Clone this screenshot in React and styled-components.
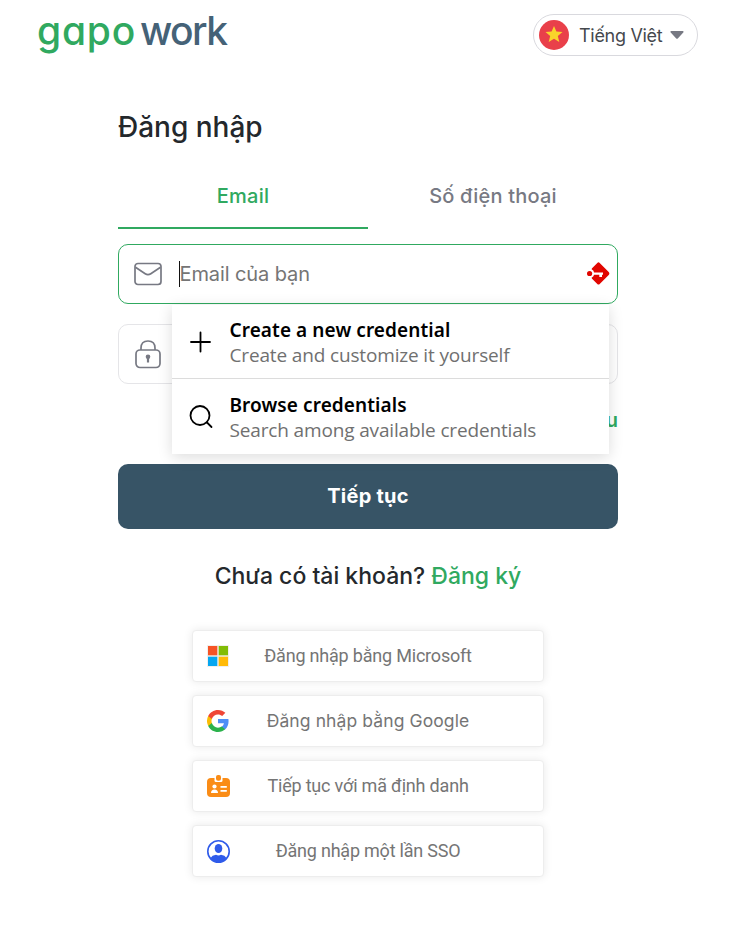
import React from "react";
import styled, { createGlobalStyle } from "styled-components";

const GlobalStyle = createGlobalStyle`
  * { box-sizing: border-box; }
  body { margin: 0; background: #fff; font-family: Inter, "Liberation Sans", sans-serif; color: #24282c; }
  button, input { font: inherit; }
`;

const Page = styled.div`
  width: 736px;
  height: 937px;
  overflow: hidden;
`;

const Header = styled.header`
  display: flex;
  justify-content: space-between;
  align-items: flex-start;
  height: 70px;
  padding: 14px 38px 0 37px;
`;

const Logo = styled.div`
  display: flex;
  gap: 5px;
  height: 42px;
  line-height: 34px;
  font-size: 39px;
  font-weight: 520;
  font-feature-settings: "cv11";
  white-space: nowrap;
`;

const LogoWord = styled.span`
  width: ${(p) => p.$width}px;
  color: ${(p) => p.$color};
  letter-spacing: ${(p) => p.$spacing}px;
`;

const Language = styled.button`
  display: flex;
  align-items: center;
  width: 165px;
  height: 42px;
  padding: 0 13px 0 5px;
  border: 1px solid #d9d9de;
  border-radius: 21px;
  background: #fff;
  color: #45484d;
  font-size: 18px;
  white-space: nowrap;
`;

const LanguageName = styled.span`
  width: 84px;
  margin: 0 7px 0 10px;
  text-align: left;
  letter-spacing: -0.3px;
`;

const Main = styled.main`
  width: 500px;
  margin: 0 auto;
`;

const Title = styled.h1`
  margin: 0;
  padding-top: 39px;
  height: 94px;
  font-size: 28px;
  line-height: 36px;
  font-weight: 500;
`;

const Tabs = styled.div`
  display: grid;
  grid-template-columns: 1fr 1fr;
  height: 65px;
`;

const Tab = styled.button`
  height: 65px;
  padding: 1px 0 0;
  border: 0;
  border-bottom: 2px solid ${(p) => (p.$active ? "#30a960" : "transparent")};
  background: none;
  color: ${(p) => (p.$active ? "#30a960" : "#777983")};
  font-size: 20px;
  font-weight: 500;
  letter-spacing: 0.2px;
`;

const Field = styled.div`
  position: relative;
  display: flex;
  align-items: center;
  height: 60px;
  margin-top: ${(p) => p.$gap}px;
  padding: 0 7px 0 15px;
  border: 1px solid ${(p) => (p.$focus ? "#30a960" : "#e5e5e8")};
  border-radius: 10px;
`;

const Placeholder = styled.div`
  flex: 1;
  height: 26px;
  margin-left: 17px;
  border-left: 1px solid #111;
  color: #757575;
  font-size: 20px;
  line-height: 27px;
  letter-spacing: -0.1px;
  text-indent: -0.5px;
`;

const Popup = styled.div`
  position: absolute;
  z-index: 2;
  top: 60px;
  left: 53px;
  width: 437px;
  height: 149px;
  background: #fff;
  box-shadow: 0 3px 14px rgba(0, 0, 0, 0.14);
  font-family: "Noto Sans", sans-serif;
`;

const PopupItem = styled.div`
  display: flex;
  align-items: center;
  gap: 16px;
  height: ${(p) => p.$height}px;
  padding: 0 0 0 15.5px;
  border-bottom: ${(p) => (p.$divided ? "1px solid #dcdcdc" : "0")};
`;

const PopupText = styled.div`
  padding-top: 2px;
`;

const PopupTitle = styled.div`
  color: #000;
  font-size: 19px;
  line-height: 25px;
  font-weight: 600;
  letter-spacing: 0.09px;
`;

const PopupNote = styled.div`
  color: #707070;
  font-size: 19px;
  line-height: 25px;
  font-family: "Open Sans", sans-serif;
  letter-spacing: -0.15px;
`;

const Forgot = styled.div`
  height: 80px;
  padding-top: 22px;
  text-align: right;
  color: #30a960;
  font-size: 20px;
  line-height: 28px;
  font-weight: 600;
`;

const Submit = styled.button`
  display: block;
  width: 500px;
  height: 65px;
  padding: 0 0 2px;
  border: 0;
  border-radius: 10px;
  background: #375466;
  color: #fff;
  font-size: 20px;
  font-weight: 700;
  letter-spacing: 0.25px;
`;

const Signup = styled.p`
  margin: 29px 0 0;
  height: 72px;
  text-align: center;
  font-size: 23px;
  line-height: 36px;
  font-weight: 450;
  white-space: nowrap;
`;

const SignupLink = styled.a`
  color: #30a960;
  font-weight: 500;
`;

const Providers = styled.div`
  display: flex;
  flex-direction: column;
  gap: 13px;
  width: 352px;
  margin: 0 auto;
`;

const Provider = styled.button`
  display: flex;
  align-items: center;
  width: 352px;
  height: 52px;
  padding: 0 37px 0 13px;
  border: 1px solid #ededed;
  border-radius: 4px;
  background: #fff;
  box-shadow: 0 0 10px rgba(0, 0, 0, 0.09);
  color: #757575;
  font-family: ${(p) => (p.$inter ? "Inter" : "Roboto")}, sans-serif;
  font-size: ${(p) => (p.$inter ? 17.5 : 18)}px;
  font-weight: 400;
`;

const ProviderName = styled.span`
  flex: 1;
  padding-bottom: 2px;
  text-align: center;
  letter-spacing: ${(p) => p.$spacing}px;
`;

const FlagIcon = () => (
  <svg width="30" height="30" viewBox="0 0 30 30">
    <circle cx="15" cy="15" r="15" fill="#e9404a" />
    <path d="M15 6l2.400 5.500 6.100.500-4.700 4 1.500 6-5.300-3.200-5.300 3.200 1.500-6-4.700-4 6.100-.500z" fill="#f9d52b" />
  </svg>
);

const Caret = () => (
  <svg width="14" height="10" viewBox="0 0 14 10">
    <path d="M1.300 1h11.400c.9 0 1.200.8.6 1.400L8 8.300q-1 1-2 0L.7 2.400C.1 1.800.4 1 1.300 1z" fill="#777983" />
  </svg>
);

const MailIcon = () => (
  <svg width="28" height="24" viewBox="0 0 28 24" fill="none" stroke="#777983" strokeWidth="1.7">
    <rect x="1" y="1.500" width="26" height="21" rx="3" />
    <path d="M1.500 5.200l9.700 6.500q2.800 1.800 5.600 0l9.700-6.500" />
  </svg>
);

const LockIcon = () => (
  <svg width="28" height="30" viewBox="0 0 28 30" fill="none" stroke="#777983" strokeWidth="1.700">
    <rect x="2" y="11" width="24" height="17.500" rx="4" />
    <path d="M7 11V9q0-7 7-7t7 7v2" />
    <circle cx="14" cy="17.700" r="2.300" fill="#777983" stroke="none" />
    <path d="M14 18v5.500" strokeWidth="2.200" />
  </svg>
);

const KeyBadge = () => (
  <svg width="24" height="24" viewBox="0 0 24 24">
    <path d="M5.800 6.400L11.300.9q1.200-1.200 2.400 0l9 9q1.300 1.600 0 3.100l-9 9q-1.200 1.200-2.400 0l-5.500-5.500z" fill="#e10600" />
    <path d="M4 7.800h2.300a3.500 3.500 0 0 1 1.700 2.600H17v2.400h-1v2.300h-2.700v-2.300H8a3.500 3.500 0 0 1-1.700 2.400H4z" fill="#fff" />
    <circle cx="3.600" cy="11.500" r="2.600" fill="#e10600" />
  </svg>
);

const PlusIcon = () => (
  <svg width="26" height="26" viewBox="0 0 26 26" stroke="#000" strokeWidth="1.800" strokeLinecap="round">
    <path d="M3 13h19M12.500 3.500v19" />
  </svg>
);

const SearchIcon = () => (
  <svg width="26" height="26" viewBox="0 0 26 26" fill="none" stroke="#000" strokeWidth="1.800" strokeLinecap="round">
    <circle cx="12" cy="11.500" r="9.500" />
    <path d="M19 18.500l4.500 4.500" />
  </svg>
);

const MicrosoftIcon = () => (
  <svg width="24" height="24" viewBox="0 0 24 24">
    <path d="M1 1h22v22H1z" fill="#f1efec" />
    <path d="M2 2h9.300v9.300H2z" fill="#f65325" />
    <path d="M12.700 2H22v9.300h-9.300z" fill="#81bc06" />
    <path d="M2 12.700h9.300V22H2z" fill="#05a6f0" />
    <path d="M12.700 12.700H22V22h-9.300z" fill="#ffba08" />
  </svg>
);

const GoogleIcon = () => (
  <svg width="24" height="24" viewBox="0 0 24 24">
    <path d="M22.560 12.250c0-.780-.070-1.530-.200-2.250H12v4.260h5.920c-.260 1.370-1.040 2.530-2.210 3.310v2.770h3.570c2.080-1.920 3.280-4.740 3.280-8.090z" fill="#4f8ff7" />
    <path d="M12 23c2.970 0 5.460-.980 7.280-2.660l-3.570-2.770c-.980.660-2.230 1.060-3.710 1.060-2.860 0-5.290-1.930-6.160-4.530H2.180v2.840C3.990 20.530 7.700 23 12 23z" fill="#2bb24c" />
    <path d="M5.840 14.090A6.600 6.600 0 0 1 5.840 9.910V7.070H2.180a11 11 0 0 0 0 9.860z" fill="#fbbc05" />
    <path d="M12 5.380c1.620 0 3.060.560 4.210 1.640l3.150-3.150C17.450 2.090 14.970 1 12 1 7.700 1 3.990 3.470 2.180 7.070l3.660 2.840C6.710 7.310 9.140 5.380 12 5.380z" fill="#ef4636" />
  </svg>
);

const BadgeIcon = () => (
  <svg width="24" height="24" viewBox="0 0 24 24">
    <rect x="1" y="4" width="23" height="19" rx="4" fill="#fa8c16" />
    <path d="M8.500 3v3.500q0 1.500 1.500 1.500h5q1.500 0 1.500-1.500V3z" fill="#fff" />
    <rect x="10" y="1" width="5" height="5.700" rx="2" fill="#fa8c16" />
    <circle cx="8.500" cy="12.500" r="2.100" fill="#fff" />
    <path d="M5 19q0-3.500 3.500-3.500T12 19zM14.500 12h6.300v1.800h-6.300zM14.500 16h6.300v1.800h-6.300z" fill="#fff" />
  </svg>
);

const PersonIcon = () => (
  <svg width="24" height="24" viewBox="0 0 24 24">
    <circle cx="12.500" cy="12.500" r="10.700" fill="#fff" stroke="#2f5bea" strokeWidth="1.600" />
    <ellipse cx="12.500" cy="9.500" rx="3.800" ry="4.600" fill="#2f5bea" />
    <path d="M4.500 19q1.500-2.800 5.500-3.200 2.500 1.200 5 0 4 .400 5.500 3.200-3 4.300-8 4.300t-8-4.300z" fill="#2f5bea" />
  </svg>
);

const providers = [
  { name: "Đăng nhập bằng Microsoft", Icon: MicrosoftIcon, spacing: -0.2 },
  { name: "Đăng nhập bằng Google", Icon: GoogleIcon, spacing: 0.1, inter: true },
  { name: "Tiếp tục với mã định danh", Icon: BadgeIcon, spacing: -0.19 },
  { name: "Đăng nhập một lần SSO", Icon: PersonIcon, spacing: -0.22 },
];

export default function App() {
  return (
    <Page>
      <GlobalStyle />
      <Header>
        <Logo>
          <LogoWord $width={98} $color="#30a960" $spacing={0.8}>gapo</LogoWord>
          <LogoWord $width={88} $color="#456277" $spacing={-1.6}>work</LogoWord>
        </Logo>
        <Language>
          <FlagIcon />
          <LanguageName>Tiếng Việt</LanguageName>
          <Caret />
        </Language>
      </Header>
      <Main>
        <Title>Đăng nhập</Title>
        <Tabs>
          <Tab $active>Email</Tab>
          <Tab>Số điện thoại</Tab>
        </Tabs>
        <Field $gap={15} $focus>
          <MailIcon />
          <Placeholder>Email của bạn</Placeholder>
          <KeyBadge />
          <Popup>
            <PopupItem $height={74} $divided>
              <PlusIcon />
              <PopupText>
                <PopupTitle>Create a new credential</PopupTitle>
                <PopupNote>Create and customize it yourself</PopupNote>
              </PopupText>
            </PopupItem>
            <PopupItem $height={75}>
              <SearchIcon />
              <PopupText>
                <PopupTitle>Browse credentials</PopupTitle>
                <PopupNote>Search among available credentials</PopupNote>
              </PopupText>
            </PopupItem>
          </Popup>
        </Field>
        <Field $gap={20}>
          <LockIcon />
        </Field>
        <Forgot>u</Forgot>
        <Submit>Tiếp tục</Submit>
        <Signup>
          Chưa có tài khoản? <SignupLink>Đăng ký</SignupLink>
        </Signup>
        <Providers>
          {providers.map(({ name, Icon, spacing, inter }) => (
            <Provider key={name} $inter={inter}>
              <Icon />
              <ProviderName $spacing={spacing}>{name}</ProviderName>
            </Provider>
          ))}
        </Providers>
      </Main>
    </Page>
  );
}
